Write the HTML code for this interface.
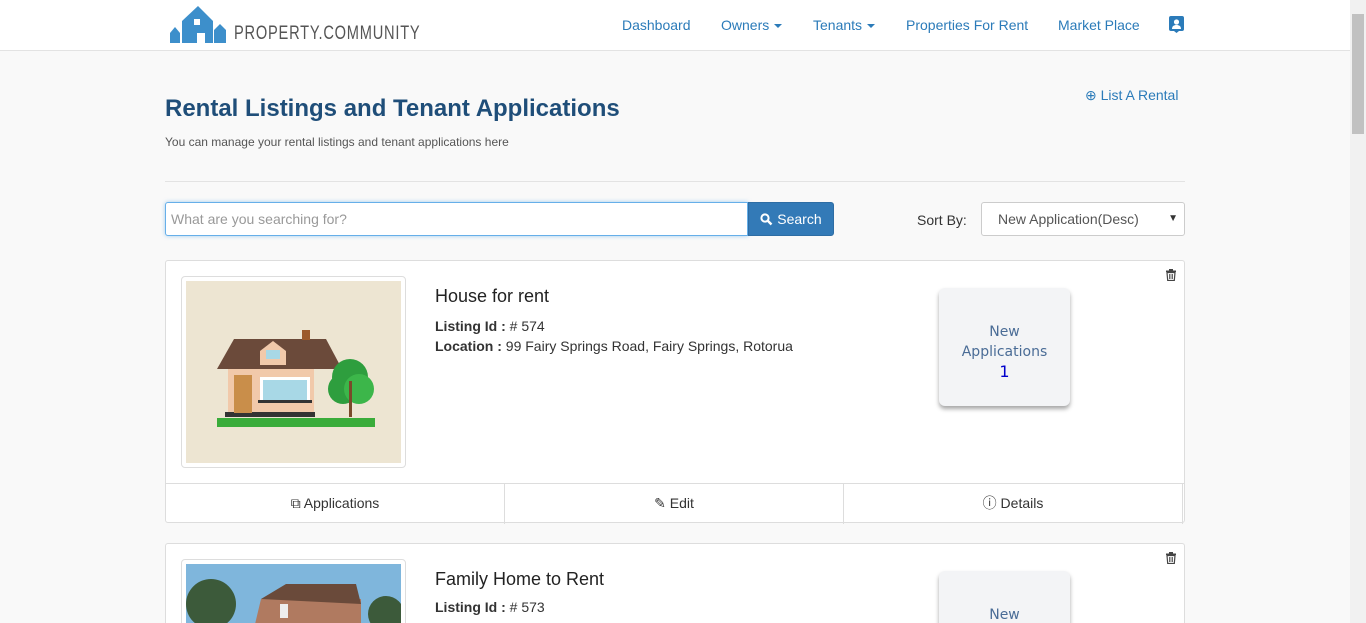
<!DOCTYPE html>
<html><head><meta charset="utf-8"><style>
*{box-sizing:border-box;margin:0;padding:0}
html{overflow:hidden;height:623px}
body{width:1366px;height:623px;overflow:hidden;background:#f9f9f9;font-family:"Liberation Sans",Arial,sans-serif;color:#333;position:relative}
.abs{position:absolute}
.nav{left:0;top:0;width:1350px;height:51px;background:#fff;border-bottom:1px solid #e3e3e3}
.nav a{position:absolute;top:17px;font-size:14px;color:#2b7bb9;text-decoration:none}
.caret{display:inline-block;width:0;height:0;border-left:4px solid transparent;border-right:4px solid transparent;border-top:4px solid #2b7bb9;vertical-align:middle;margin-left:5px}
.sb{left:1350px;top:0;width:16px;height:623px;background:#f1f1f1}
.card{left:165px;width:1020px;background:#fff;border:1px solid #ddd;border-radius:3px}
.btnrow div{position:absolute;top:0;height:40px;line-height:38px;text-align:center;font-size:14px;border-right:1px solid #ddd}
.apps{background:#f3f4f6;border-radius:6px;box-shadow:0 3px 4px rgba(0,0,0,.35);text-align:center;font-family:"DejaVu Sans",sans-serif;color:#4a6c96;font-size:14px}
</style></head><body>
<div class="abs nav">
<svg class="abs" style="left:169px;top:4px" width="58" height="40" viewBox="0 0 58 40"><path fill="#3d8fcb" d="M1 39V29l5-6 5 6v10zM13 39V17L29 2l15 15v22H36V29h-8v10zM45 39V26l6-6 6 6v13z"/><rect x="25" y="15" width="6" height="6" fill="#fff"/></svg>
<div class="abs" style="left:234px;top:23px;font-size:19px;letter-spacing:1px;color:#555;transform:scaleX(.77);transform-origin:left;white-space:nowrap">PROPERTY.COMMUNITY</div>
<a style="left:622px">Dashboard</a>
<a style="left:721px">Owners<span class="caret"></span></a>
<a style="left:813px">Tenants<span class="caret"></span></a>
<a style="left:906px">Properties For Rent</a>
<a style="left:1058px">Market Place</a>
<svg class="abs" style="left:1169px;top:16px" width="15" height="17" viewBox="0 0 15 17"><rect width="15" height="15" rx="2" fill="#2b7bb9"/><circle cx="7.5" cy="6" r="2.6" fill="#fff"/><path d="M3 13c0-3 2-4 4.5-4S12 10 12 13z" fill="#fff"/><path d="M5 15l2.5 2 2.5-2z" fill="#2b7bb9"/></svg>
</div>
<div class="abs sb"><div style="position:absolute;left:2px;top:14px;width:12px;height:120px;background:#c1c1c1"></div></div>
<div class="abs" style="left:165px;top:95px;font-size:24px;font-weight:bold;color:#1f4e79">Rental Listings and Tenant Applications</div>
<div class="abs" style="left:1085px;top:87px;font-size:14px;color:#2b7bb9">⊕ List A Rental</div>
<div class="abs" style="left:165px;top:135px;font-size:12px;color:#555">You can manage your rental listings and tenant applications here</div>
<div class="abs" style="left:165px;top:181px;width:1020px;border-top:1px solid #e3e3e3"></div>
<div class="abs" style="left:165px;top:202px;width:583px;height:34px;border:1px solid #66afe9;background:#fff;border-radius:3px 0 0 3px;box-shadow:0 0 4px rgba(102,175,233,.6);font-size:14px;color:#999;padding:8px 5px">What are you searching for?</div>
<div class="abs" style="left:748px;top:202px;width:86px;height:34px;background:#337ab7;border:1px solid #2e6da4;border-radius:0 3px 3px 0;color:#fff;font-size:14px;line-height:32px;text-align:center"><svg width="13" height="13" viewBox="0 0 13 13" style="vertical-align:-2px"><circle cx="5" cy="5" r="3.6" fill="none" stroke="#fff" stroke-width="2"/><path d="M7.5 7.5l4 4" stroke="#fff" stroke-width="2.4"/></svg> Search</div>
<div class="abs" style="left:917px;top:212px;font-size:14px;color:#333">Sort By:</div>
<div class="abs" style="left:981px;top:202px;width:204px;height:34px;border:1px solid #ccc;border-radius:3px;background:#fff;font-size:14px;line-height:32px;padding-left:16px;color:#555">New Application(Desc)<span style="position:absolute;right:6px;font-size:10px;color:#333">▼</span></div>

<div class="abs card" style="top:260px;height:263px">
<div class="abs" style="left:15px;top:15px;width:225px;height:192px;border:1px solid #ddd;border-radius:4px;background:#fff;padding:4px">
<svg width="215" height="182" viewBox="0 0 215 182"><rect width="215" height="182" fill="#ede5d2"/><rect x="31" y="137" width="158" height="9" fill="#3aac3a"/><rect x="42" y="87" width="86" height="48" fill="#f1c9aa"/><rect x="39" y="131" width="90" height="5" fill="#333"/><path d="M31 88L48 58h92l16 30z" fill="#6b4a3a"/><rect x="116" y="49" width="8" height="10" fill="#9c5a2a"/><path d="M74 70l13-10 13 10v14H74z" fill="#f1c9aa"/><rect x="80" y="69" width="14" height="9" fill="#a8d8e6"/><rect x="48" y="94" width="18" height="38" fill="#c98e4a"/><rect x="74" y="96" width="50" height="26" fill="#fff"/><rect x="77" y="99" width="44" height="20" fill="#a8d8e6"/><rect x="72" y="119" width="54" height="3" fill="#333"/><circle cx="164" cy="96" r="18" fill="#2e9e3e"/><circle cx="157" cy="108" r="15" fill="#2e9e3e"/><circle cx="173" cy="108" r="15" fill="#3cb64a"/><rect x="163" y="100" width="3" height="36" fill="#7a4a2a"/></svg></div>
<div class="abs" style="left:269px;top:25px;font-size:18px;color:#222">House for rent</div>
<div class="abs" style="left:269px;top:55px;font-size:14px;line-height:20px"><b>Listing Id :</b> # 574<br><b>Location :</b> 99 Fairy Springs Road, Fairy Springs, Rotorua</div>
<div class="abs apps" style="left:773px;top:27px;width:131px;height:118px;padding-top:34px;line-height:20px">New<br>Applications<br><span style="color:#00c;font-size:16px">1</span></div>
<svg class="abs" style="left:1000px;top:8px" width="10" height="12" viewBox="0 0 10 12"><rect x="0" y="1.5" width="10" height="1.5" fill="#444"/><rect x="3" y="0" width="4" height="2" fill="#444"/><path d="M1 3.5h8l-.7 8H1.7z" fill="none" stroke="#444" stroke-width="1.2"/><path d="M3.5 5v5M5 5v5M6.5 5v5" stroke="#444" stroke-width=".8"/></svg>
<div class="abs btnrow" style="left:0;top:222px;width:1018px;height:40px;border-top:1px solid #ddd">
<div style="left:0;width:339px">⧉ Applications</div><div style="left:339px;width:339px">✎ Edit</div><div style="left:678px;width:339px">ⓘ Details</div></div>
</div>

<div class="abs card" style="top:543px;height:80px;border-bottom:none;overflow:hidden;border-radius:3px 3px 0 0">
<div class="abs" style="left:15px;top:15px;width:225px;height:192px;border:1px solid #ddd;border-radius:4px;background:#fff;padding:4px">
<svg width="215" height="182" viewBox="0 0 215 182"><rect width="215" height="182" fill="#7fb6dc"/><circle cx="25" cy="40" r="25" fill="#3c5a3a"/><circle cx="200" cy="50" r="18" fill="#3c5a3a"/><path d="M40 182l35-147h100v147z" fill="#b07a60"/><path d="M75 35l25-15h70l5 20z" fill="#6a4a3a"/><rect x="94" y="40" width="8" height="14" fill="#eee"/></svg></div>
<div class="abs" style="left:269px;top:25px;font-size:18px;color:#222">Family Home to Rent</div>
<div class="abs" style="left:269px;top:55px;font-size:14px"><b>Listing Id :</b> # 573</div>
<div class="abs apps" style="left:773px;top:27px;width:131px;height:118px;padding-top:34px;line-height:20px">New</div>
<svg class="abs" style="left:1000px;top:8px" width="10" height="12" viewBox="0 0 10 12"><rect x="0" y="1.5" width="10" height="1.5" fill="#444"/><rect x="3" y="0" width="4" height="2" fill="#444"/><path d="M1 3.5h8l-.7 8H1.7z" fill="none" stroke="#444" stroke-width="1.2"/><path d="M3.5 5v5M5 5v5M6.5 5v5" stroke="#444" stroke-width=".8"/></svg>
</div>
</body></html>
